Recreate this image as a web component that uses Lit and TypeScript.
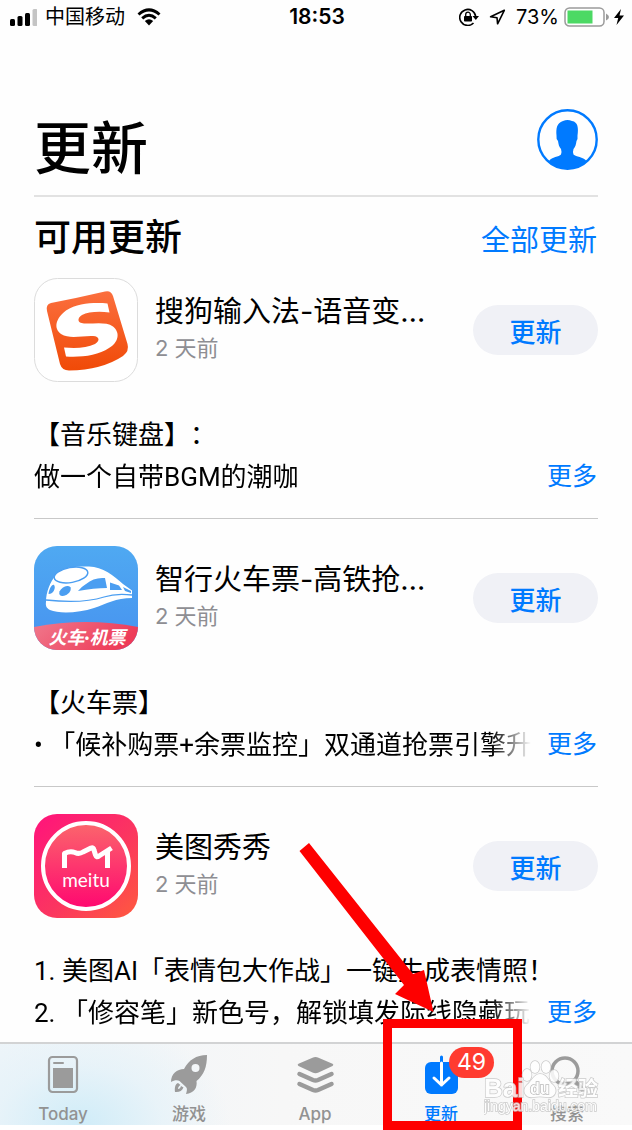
import { LitElement, html, svg, css, nothing } from "lit";
import { customElement, property } from "lit/decorators.js";

type AppInfo = {
  id: string;
  name: string;
  age: string;
  lines: [string, string];
};

const APPS: AppInfo[] = [
  {
    id: "sogou",
    name: "搜狗输入法-语音变…",
    age: "2 天前",
    lines: ["【音乐键盘】：", "做一个自带BGM的潮咖"],
  },
  {
    id: "train",
    name: "智行火车票-高铁抢…",
    age: "2 天前",
    lines: ["【火车票】", "• 「候补购票+余票监控」双通道抢票引擎升"],
  },
  {
    id: "meitu",
    name: "美图秀秀",
    age: "2 天前",
    lines: ["1. 美图AI「表情包大作战」一键生成表情照！", "2. 「修容笔」新色号，解锁填发际线隐藏玩法"],
  },
];

const sogouArt = svg`
  <defs>
    <linearGradient id="so" x1="0" y1="0" x2="0" y2="1">
      <stop offset="0" stop-color="#fb6f3e"></stop><stop offset="1" stop-color="#f04a07"></stop>
    </linearGradient>
  </defs>
  <rect x="0.5" y="0.5" width="103" height="103" rx="23" fill="#fff" stroke="#dcdcdc"></rect>
  <path d="M17 25 Q43 20 71 13.500 Q77 12 79 18 L93.500 66 Q95.500 73 89 78 Q68 92 35 92.500 Q28 92.500 26 86 L13 33 Q11.500 26.500 17 25Z" fill="url(#so)"></path>
  <path d="M73.500 25.500 L75.500 34.500 C64 33 54 34 48 37 C43 40 43 45 50 45.500 C60 46 72 43.500 79 48.500 C87 55 84 65 75 70 C64 77.500 47 79.500 32 78.500 L30 69.500 C42 70.500 53 70 61 66 C66 63 66 58.500 59 58 C48 57.500 36 61.500 27 56 C19 50 22 40 32 32.500 C44 25 60 24.500 73.500 25.500Z" fill="#fff"></path>`;

const trainArt = svg`
  <defs>
    <linearGradient id="tb" x1="0" y1="0" x2="0" y2="1">
      <stop offset="0" stop-color="#4fa9f2"></stop><stop offset="1" stop-color="#4792ef"></stop>
    </linearGradient>
    <linearGradient id="tr" x1="0" y1="0" x2="1" y2="0.300">
      <stop offset="0" stop-color="#f0788c"></stop><stop offset="1" stop-color="#ee3b58"></stop>
    </linearGradient>
    <clipPath id="tc"><rect width="104" height="104" rx="23"></rect></clipPath>
  </defs>
  <g clip-path="url(#tc)">
    <rect width="104" height="104" fill="url(#tb)"></rect>
    <path d="M0 81 Q52 71 104 81 V104 H0Z" fill="url(#tr)"></path>
    <path d="M12 56 C12 46 16 36 22 29 C31 21 44 20 54 20.500 C68 20 80 30 89 38 L98 44.500 V52 C82 52 72 58 60 62 C45 67 25 68 16 64 C12 62 11.500 59 12 56Z" fill="#fff"></path>
    <ellipse cx="37" cy="29" rx="17" ry="7.500" fill="#fff" stroke="#4b9ef1" stroke-width="1.500" transform="rotate(-10 37 29)"></ellipse>
    <path d="M52 38 Q60 31 71 32 L73 42 Q60 42 44 45 Q47 41 52 38Z M76 36.500 L85 39.500 L88 44 H76Z M89 41 L97 45 V47 L91 45Z" fill="#4b9ef1"></path>
    <ellipse cx="31" cy="45" rx="6.500" ry="4" fill="#4b9ef1" transform="rotate(-35 31 45)"></ellipse>
    <path d="M14.500 48 C15 43 18 38 20 39 C22 41 20 48 14.500 48Z" fill="#4b9ef1"></path>
    <path d="M12 54 Q48 58 70 51 Q82 47 98 49" fill="none" stroke="#4b9ef1" stroke-width="1.300"></path>
    <text x="53" y="98" text-anchor="middle" fill="#fff" font-size="18" font-weight="700" font-style="italic" font-family="Lato, 'Noto Sans CJK SC', sans-serif">火车·机票</text>
  </g>`;

const meituArt = svg`
  <defs>
    <linearGradient id="mb" x1="0" y1="0" x2="1" y2="1">
      <stop offset="0" stop-color="#ff137c"></stop><stop offset="0.550" stop-color="#fb3560"></stop><stop offset="1" stop-color="#ff5a3e"></stop>
    </linearGradient>
    <linearGradient id="mc" x1="0.500" y1="0" x2="0.500" y2="1">
      <stop offset="0" stop-color="#fb666c"></stop><stop offset="1" stop-color="#ff0770"></stop>
    </linearGradient>
  </defs>
  <rect width="104" height="104" rx="23" fill="url(#mb)"></rect>
  <circle cx="52" cy="52" r="43" fill="url(#mc)" stroke="#fff" stroke-width="4"></circle>
  <path d="M30.500 54 V39.500 Q36 36.500 41 38.500 Q45 40.500 49 38 L57 34 Q59.500 33 60 36 L61.500 41 Q62.500 44 65 42 L77.500 34 M73.500 37 V54" fill="none" stroke="#fff" stroke-width="5" stroke-linejoin="round"></path>
  <text x="52" y="73" text-anchor="middle" fill="#fff" font-size="19" font-family="Lato, sans-serif">meitu</text>`;

const ART: Record<string, unknown> = { sogou: sogouArt, train: trainArt, meitu: meituArt };

const TAB_ICONS: Record<string, unknown> = {
  today: svg`
    <rect x="6" y="3" width="28" height="35" rx="3.500" fill="none" stroke="#9b9b9b" stroke-width="2.200"></rect>
    <rect x="10" y="8" width="11" height="2" rx="1" fill="#9b9b9b"></rect>
    <rect x="10" y="14" width="20" height="20" fill="#9b9b9b"></rect>`,
  games: svg`
    <path fill-rule="evenodd" d="M38 1 C27 1 20 6 15 15 C8 15 2 20 2 28 C5 26 9 26 10.500 27 L17 33 C18.500 34.500 18 37 17 40 C25 39 28.500 34 27.500 27 C35 21 38 13 38 1Z M26.500 10 a4 4 0 1 1 0 8 a4 4 0 1 1 0 -8Z" fill="#9b9b9b"></path>
    <path d="M9 29 C6 30 5.500 34 6 38 C10 38.500 13 37 14.500 33.500 L12 32 C11.500 34 10.500 35 9 35 C9 33 10 32 11.500 31Z" fill="#9b9b9b"></path>`,
  apps: svg`
    <path d="M20.500 3 Q22 3 23.500 3.700 L37.500 9.800 Q39.300 10.800 37.500 12 L23.500 18.500 Q20.500 20 17.500 18.500 L3.500 12 Q1.700 10.800 3.500 9.800 L17.500 3.700 Q19 3 20.500 3Z" fill="#9b9b9b"></path>
    <path d="M4.500 20 L18 26 Q20.500 27 23 26 L36.500 20 M4.500 30 L18 36 Q20.500 37 23 36 L36.500 30" fill="none" stroke="#9b9b9b" stroke-width="4.500" stroke-linecap="round"></path>`,
  updates: svg`
    <rect x="4" y="8" width="33" height="32" rx="6" fill="#007aff"></rect>
    <path d="M20.500 3 V10" stroke="#007aff" stroke-width="3" stroke-linecap="round"></path>
    <path d="M20.500 9 V31 M13 24 L20.500 31 L28 24" fill="none" stroke="#fff" stroke-width="3" stroke-linecap="round" stroke-linejoin="round"></path>`,
  search: svg`
    <circle cx="18" cy="17" r="13" fill="none" stroke="#9b9b9b" stroke-width="3.500"></circle>
    <path d="M27.500 27 L36 36" stroke="#9b9b9b" stroke-width="4.500" stroke-linecap="round"></path>`,
};

const TABS = [
  { id: "today", label: "Today" },
  { id: "games", label: "游戏" },
  { id: "apps", label: "App" },
  { id: "updates", label: "更新", badge: "49" },
  { id: "search", label: "搜索" },
];

@customElement("status-bar")
class StatusBar extends LitElement {
  static styles = css`
    :host {
      display: grid;
      grid-template-columns: 1fr auto 1fr;
      align-items: center;
      height: 34px;
      padding: 0 8px 0 10px;
      font-size: 20px;
      line-height: 24px;
    }
    .left,
    .right {
      display: flex;
      align-items: center;
    }
    .left {
      gap: 8px;
    }
    .right {
      justify-content: flex-end;
      gap: 5px;
    }
    .carrier {
      margin-right: 4px;
    }
    .time {
      font-size: 21px;
      font-weight: 600;
    }
    .lock {
      margin-right: 5px;
    }
    .arrow {
      margin-right: 5px;
    }
  `;
  render() {
    return html`
      <div class="left">
        <svg width="27" height="17" viewBox="0 0 27 17">
          <rect y="10" width="5" height="7" rx="1.500"></rect>
          <rect x="7.500" y="7" width="5" height="10" rx="1.500"></rect>
          <rect x="15" y="4" width="5" height="13" rx="1.500"></rect>
          <rect x="22.500" width="5" height="17" rx="1.500" fill="#c4c4c4"></rect>
        </svg>
        <span class="carrier">中国移动</span>
        <svg width="24" height="18" viewBox="0 0 24 18">
          <path d="M1.500 6.500 Q12 -2.800 22.500 6.500 M5.200 10.300 Q12 4.300 18.800 10.300" fill="none" stroke="#000" stroke-width="3"></path>
          <path d="M7.800 13 Q12 9.500 16.200 13 L12 17.500Z"></path>
        </svg>
      </div>
      <span class="time">18:53</span>
      <div class="right">
        <svg class="lock" width="20" height="18" viewBox="0 0 20 18">
          <path d="M14.500 15 A8 8 0 1 1 16.700 8.500" fill="none" stroke="#000" stroke-width="1.600"></path>
          <path d="M13.500 8 H20 L16.800 12Z"></path>
          <rect x="5" y="8" width="8" height="5.500" rx="0.800"></rect>
          <path d="M6.700 8.500 V6.500 a2.300 2.300 0 0 1 4.600 0 V8.500" fill="none" stroke="#000" stroke-width="1.300"></path>
        </svg>
        <svg class="arrow" width="17" height="16" viewBox="0 0 17 16">
          <path d="M15.300 1.300 L1.600 7.800 L8 8.700 L8.600 14.800Z" fill="none" stroke="#000" stroke-width="1.600" stroke-linejoin="round"></path>
        </svg>
        <span>73%</span>
        <svg width="45" height="20" viewBox="0 0 45 20">
          <rect x="1" y="1" width="39" height="18" rx="4.500" fill="#fff" stroke="#9a9a9a" stroke-width="1.500"></rect>
          <rect x="3.500" y="3.500" width="25" height="13" fill="#4cd964"></rect>
          <path d="M42 6.500 Q45 8 45 10 Q45 12 42 13.500Z" fill="#9a9a9a"></path>
        </svg>
        <svg width="10" height="16" viewBox="0 0 10 16"><path d="M7 0 L0 9 H4.200 L2.500 16 L10 6.500 H5.500Z"></path></svg>
      </div>
    `;
  }
}

@customElement("update-item")
class UpdateItem extends LitElement {
  @property({ attribute: false }) app!: AppInfo;

  static styles = css`
    :host {
      display: block;
      padding: 27px 0 20px;
      border-bottom: 1px solid #c8c8c8;
    }
    :host(:first-of-type) {
      padding-top: 0;
    }
    :host(:last-of-type) {
      border-bottom: 0;
      padding-bottom: 6px;
    }
    .head {
      display: flex;
      align-items: center;
      gap: 17px;
    }
    .icon {
      flex: none;
      display: block;
    }
    .meta {
      flex: 1;
      min-width: 0;
    }
    .name {
      margin: 0;
      font-size: 29px;
      line-height: 40px;
      font-weight: 400;
      white-space: nowrap;
      overflow: hidden;
    }
    .age {
      margin: 0 0 4px;
      font-size: 22px;
      line-height: 32px;
      color: #8e8e93;
    }
    button {
      font: inherit;
      border: 0;
      margin: 0;
      cursor: pointer;
      color: #007aff;
    }
    .update {
      width: 125px;
      height: 50px;
      padding: 0;
      border-radius: 25px;
      background: #f0f1f6;
      font-size: 26px;
      font-weight: 500;
    }
    .notes {
      margin-top: 32px;
      font-family: Roboto, "Noto Sans CJK SC", sans-serif;
      font-size: 26px;
      line-height: 42px;
    }
    .notes p {
      margin: 0;
      white-space: nowrap;
      overflow: hidden;
      text-spacing-trim: space-all;
    }
    .last {
      display: flex;
      gap: 16px;
    }
    .last p {
      flex: 1;
      min-width: 0;
      mask-image: linear-gradient(to right, #000 calc(100% - 40px), transparent);
    }
    .more {
      background: none;
      padding: 0 1px 0 0;
      font-size: 25px;
      line-height: 42px;
    }
  `;
  render() {
    const a = this.app;
    return html`
      <div class="head">
        <svg class="icon" width="104" height="104" viewBox="0 0 104 104">${ART[a.id]}</svg>
        <div class="meta">
          <h3 class="name">${a.name}</h3>
          <p class="age">${a.age}</p>
        </div>
        <button class="update">更新</button>
      </div>
      <div class="notes">
        <p>${a.lines[0]}</p>
        <div class="last">
          <p>${a.lines[1]}</p>
          <button class="more">更多</button>
        </div>
      </div>
    `;
  }
}

@customElement("tab-bar")
class TabBar extends LitElement {
  static styles = css`
    :host {
      display: block;
      position: relative;
      border-top: 2px solid #d2d3d4;
      border-bottom: 5px solid #fff;
      background: radial-gradient(ellipse 150px 110px at 80px 100%, #cfecf8, rgba(225, 241, 249, 0.6) 55%, transparent),
        linear-gradient(to right, #eff5f9, #f7f7f7 45%, #f9f9f9);
    }
    nav {
      display: grid;
      grid-template-columns: repeat(5, 1fr);
      padding-right: 2px;
    }
    .tab {
      position: relative;
      display: flex;
      flex-direction: column;
      align-items: center;
      padding: 10px 0 0;
      height: 81px;
      box-sizing: border-box;
      gap: 7px;
      color: #929292;
      text-decoration: none;
      font-size: 17px;
      line-height: 24px;
      font-weight: 500;
    }
    .active {
      color: #007aff;
    }
    .icon {
      flex: none;
    }
    .badge {
      position: absolute;
      left: 71px;
      top: 3px;
      width: 45px;
      height: 31px;
      border-radius: 16px;
      background: #ff3b30;
      color: #fff;
      font-size: 23px;
      line-height: 31px;
      font-weight: 400;
      text-align: center;
    }
    .highlight {
      position: absolute;
      left: 5px;
      bottom: -5px;
      width: 139px;
      height: 111px;
      box-sizing: border-box;
      border: 9px solid #fe0000;
      z-index: 2;
    }
    .pointer {
      position: absolute;
      left: -79px;
      bottom: 106px;
      z-index: 2;
    }
    .watermark {
      position: absolute;
      right: 32px;
      bottom: 6px;
      z-index: 3;
      opacity: 0.85;
      pointer-events: none;
    }
  `;
  render() {
    return html`
      <nav>
        ${TABS.map(
          (t) => html`
            <a class="tab ${t.id === "updates" ? "active" : ""}" href="#${t.id}">
              <svg class="icon" width="40" height="41" viewBox="0 0 40 41">${TAB_ICONS[t.id]}</svg>
              <span>${t.label}</span>
              ${t.badge
                ? html`<span class="badge">${t.badge}</span>
                    <span class="highlight"></span>
                    <svg class="pointer" width="140" height="176" viewBox="0 0 140 176">
                      <path d="M0.500 8 L10 0 L114 131 L125 127 L134.500 169 L96 151 L105 142Z" fill="#fe0000"></path>
                    </svg>`
                : nothing}
            </a>
          `
        )}
      </nav>
      <svg class="watermark" width="116" height="60" viewBox="0 0 116 60">
        <g fill="#fff" stroke="#c4c4c4" stroke-width="1.500" paint-order="stroke">
          <ellipse cx="43" cy="16" rx="4.500" ry="6"></ellipse>
          <ellipse cx="51" cy="8" rx="4.500" ry="6"></ellipse>
          <ellipse cx="62" cy="8" rx="4.500" ry="6"></ellipse>
          <ellipse cx="70" cy="17" rx="4.500" ry="6"></ellipse>
          <path d="M56 15 C63 15 64 22 69 26 C75 32 70 40 62 38 Q56 37 50 38 C42 40 37 32 43 26 C48 22 50 15 56 15Z"></path>
          <text x="0" y="38" font-family="'Liberation Sans', sans-serif" font-weight="700" font-size="26">Bai</text>
          <text x="46" y="35" font-family="'Liberation Sans', sans-serif" font-weight="700" font-size="16" stroke="#b0b0b0">du</text>
          <text x="74" y="37" font-family="'Noto Sans CJK SC', sans-serif" font-weight="700" font-size="20">经验</text>
          <text x="0" y="52" font-family="'Liberation Sans', sans-serif" font-size="14">jingyan.baidu.com</text>
        </g>
      </svg>
    `;
  }
}

@customElement("app-root")
class AppRoot extends LitElement {
  static styles = css`
    :host {
      display: flex;
      flex-direction: column;
      min-height: 100vh;
      overflow: hidden;
      background: #fefefe;
      color: #000;
      font-family: Inter, "Noto Sans CJK SC", sans-serif;
    }
    main {
      padding: 0 34px;
    }
    .title {
      display: flex;
      align-items: center;
      justify-content: space-between;
      padding: 71px 0 2px;
      border-bottom: 2px solid #e2e2e2;
    }
    h1 {
      margin: 0;
      font-size: 57px;
      line-height: 88px;
      font-weight: 500;
    }
    .avatar {
      display: block;
      padding: 0;
      border: 0;
      background: none;
      margin-bottom: 20px;
    }
    .avatar svg {
      display: block;
    }
    .section {
      display: flex;
      align-items: baseline;
      justify-content: space-between;
      height: 64px;
      padding-top: 17px;
    }
    h2 {
      margin: 0;
      font-size: 37px;
      line-height: 48px;
      font-weight: 500;
    }
    .all {
      font: inherit;
      border: 0;
      padding: 0 1px 0 0;
      background: none;
      font-size: 29px;
      line-height: 40px;
      color: #007aff;
    }
    tab-bar {
      margin-top: auto;
    }
  `;
  render() {
    return html`
      <status-bar></status-bar>
      <main>
        <header class="title">
          <h1>更新</h1>
          <button class="avatar" aria-label="账户">
            <svg width="61" height="61" viewBox="0 0 61 61">
              <circle cx="30.500" cy="30.500" r="29.200" fill="none" stroke="#007aff" stroke-width="2.400"></circle>
              <path d="M12 52 C15 47.500 22 48 24 45.500 Q25 43 24 40 C22 38 21.500 35 21 32 Q19 30 19.500 26.500 C19 20 19.500 14 26 12 Q30.500 10 35 12 C41 13 41.500 19 40.500 26.500 Q41 30 39.500 32 C39 35 38.500 38 36.500 40 Q35.500 43 36.500 45.500 C39 48 46 47.500 49.500 52 Q42 60 30.500 60 Q19 60 12 52Z" fill="#007aff"></path>
            </svg>
          </button>
        </header>
        <div class="section">
          <h2>可用更新</h2>
          <button class="all">全部更新</button>
        </div>
        ${APPS.map((a) => html`<update-item .app=${a}></update-item>`)}
      </main>
      <tab-bar></tab-bar>
    `;
  }
}
